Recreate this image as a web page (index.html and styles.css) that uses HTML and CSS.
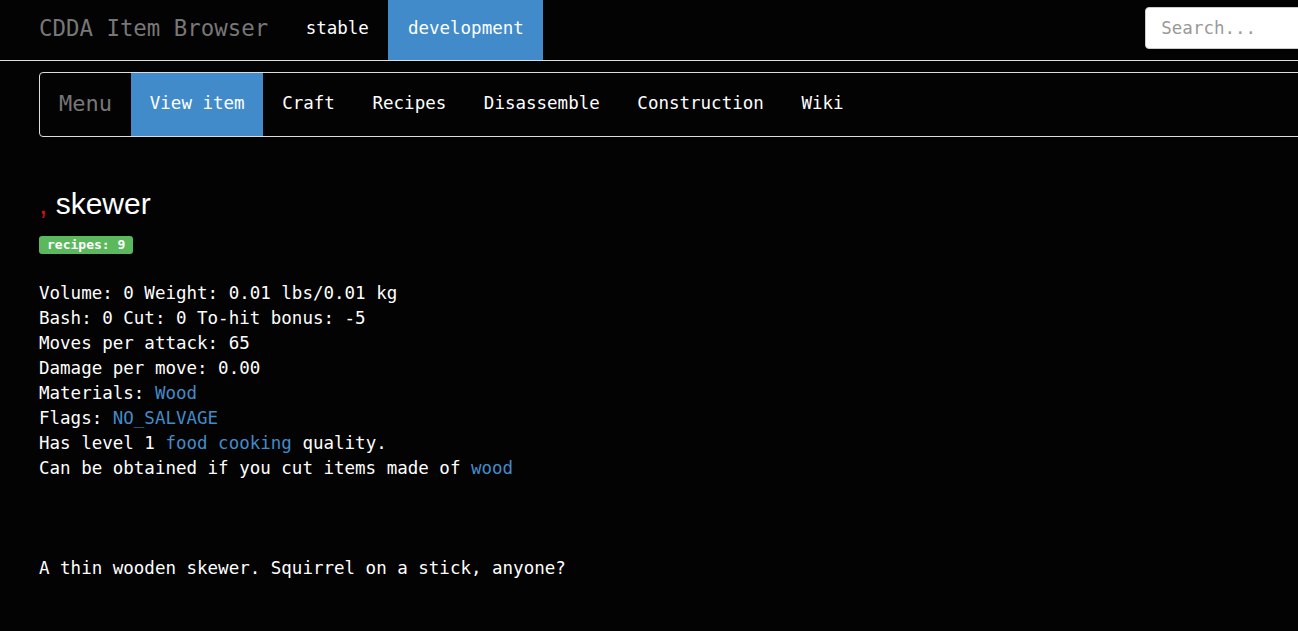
FILE: index.html
```html
<!DOCTYPE html>
<html lang="en">
<head>
<meta charset="utf-8">
<title>CDDA Item Browser</title>
<link rel="stylesheet" href="styles.css">
</head>
<body>
<nav class="topbar">
  <a class="brand" href="#">CDDA Item Browser</a>
  <a class="toplink" href="#">stable</a>
  <a class="toplink active" href="#">development</a>
  <div class="spacer"></div>
  <input class="search" type="text" placeholder="Search...">
</nav>
<main class="page">
  <nav class="menubox">
    <span class="menu-brand">Menu</span>
    <a class="tab active" href="#">View item</a>
    <a class="tab" href="#">Craft</a>
    <a class="tab" href="#">Recipes</a>
    <a class="tab" href="#">Disassemble</a>
    <a class="tab" href="#">Construction</a>
    <a class="tab" href="#">Wiki</a>
  </nav>
  <h1 class="title"><span class="symbol">,</span> skewer</h1>
  <div class="badges"><span class="badge">recipes: 9</span></div>
  <div class="stats">
    <div>Volume: 0 Weight: 0.01 lbs/0.01 kg</div>
    <div>Bash: 0 Cut: 0 To-hit bonus: -5</div>
    <div>Moves per attack: 65</div>
    <div>Damage per move: 0.00</div>
    <div>Materials: <a href="#">Wood</a></div>
    <div>Flags: <a href="#">NO_SALVAGE</a></div>
    <div>Has level 1 <a href="#">food cooking</a> quality.</div>
    <div>Can be obtained if you cut items made of <a href="#">wood</a></div>
  </div>
  <p class="description">A thin wooden skewer. Squirrel on a stick, anyone?</p>
</main>
</body>
</html>
```
FILE: styles.css
```css
html, body {
  margin: 0;
  padding: 0;
  background: #030303;
  overflow: hidden;
}
body {
  font-family: "DejaVu Sans Mono", "Liberation Mono", monospace;
  font-size: 17.5px;
  line-height: 25px;
  color: #ffffff;
  width: 1400px;
}
a {
  color: #428bca;
  text-decoration: none;
}
.topbar {
  display: flex;
  align-items: stretch;
  height: 60px;
  border-bottom: 1px solid #dddddd;
  padding-left: 39px;
}
.topbar > * {
  flex-shrink: 0;
  white-space: nowrap;
}
.brand {
  display: flex;
  align-items: center;
  font-size: 22.4px;
  color: #777777;
  padding: 0 18px 4px 0;
}
.toplink {
  display: flex;
  align-items: center;
  padding: 0 19.5px 4px;
  color: #ffffff;
}
.toplink.active {
  background: #428bca;
}
.spacer {
  flex: 0 0 602px;
}
.search {
  align-self: flex-start;
  margin-top: 7px;
  width: 260px;
  height: 42px;
  box-sizing: border-box;
  border: 1px solid #cccccc;
  border-radius: 4px;
  background: #ffffff;
  padding: 0 15px;
  font-family: "DejaVu Sans Mono", "Liberation Mono", monospace;
  font-size: 17.5px;
  color: #555555;
  outline: none;
}
.search::placeholder {
  color: #999999;
}
.page {
  padding-left: 39px;
}
.menubox {
  display: flex;
  align-items: stretch;
  margin-top: 11px;
  height: 63px;
  border: 1px solid #dddddd;
  border-radius: 4px;
}
.menubox > * {
  flex-shrink: 0;
  white-space: nowrap;
}
.menu-brand {
  display: flex;
  align-items: center;
  padding: 0 19px 2px;
  font-size: 22px;
  color: #777777;
}
.tab {
  display: flex;
  align-items: center;
  padding: 0 18.8px 2px;
  color: #ffffff;
}
.tab.active {
  background: #428bca;
}
.title {
  margin: 50px 0 0;
  font-family: "Liberation Sans", Arial, sans-serif;
  font-size: 30px;
  line-height: 33px;
  font-weight: normal;
  color: #ffffff;
}
.symbol {
  color: #cc1111;
}
.badges {
  margin-top: 16px;
  line-height: 18px;
  height: 18px;
}
.badge {
  display: inline-block;
  background: #5cb85c;
  color: #ffffff;
  font-weight: bold;
  font-size: 13px;
  line-height: 18px;
  padding: 0 8px;
  border-radius: 3px;
  vertical-align: top;
}
.stats {
  margin-top: 27px;
}
.description {
  margin: 75px 0 0;
}
```
